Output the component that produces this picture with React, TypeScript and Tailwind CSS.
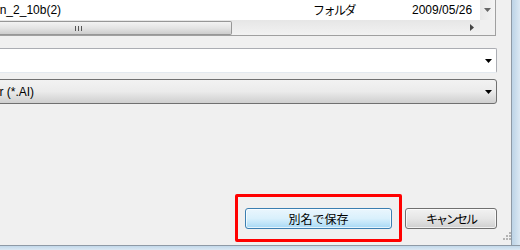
import React from "react";

const ui = { fontFamily: '"Liberation Sans", "Noto Sans CJK JP", sans-serif' };
const jp = { fontFamily: '"Noto Sans CJK JP", "Liberation Sans", sans-serif' };

function DownArrow() {
    return (
        <svg width="7" height="4" viewBox="0 0 7 4" className="shrink-0">
            <path d="M0 0h7L3.5 4z" fill="#000" />
        </svg>
    );
}

export default function App() {
    return (
        <div className="relative w-[520px] h-[250px] bg-[#f0f0f0] overflow-hidden flex flex-col text-[12px] text-black" style={ui}>
            <div className="flex h-[245px]">
                {/* dialog body */}
                <div className="w-[511px] flex flex-col">
                    {/* file list (cut off) */}
                    <div className="w-[496px] h-[36px] flex border-r border-b border-[#a0a0a0] bg-white">
                        <div className="w-[480px] flex flex-col">
                            <div className="h-[20px] flex items-center overflow-hidden whitespace-nowrap">
                                <span className="w-[313px] shrink-0 overflow-hidden">
                                    <span className="-ml-[29px] inline-block">design_2_10b(2)</span>
                                </span>
                                <span className="w-[99px] shrink-0 tracking-[-1.5px]" style={jp}>フォルダ</span>
                                <span className="shrink-0">2009/05/26</span>
                            </div>
                            <div className="h-[15px] flex items-center bg-gradient-to-b from-[#e6e6e6] to-[#f2f2f2]">
                                <div className="w-[232px] h-[14px] mt-[1px] rounded-r-[2px] border border-l-0 border-[#979797] bg-gradient-to-b from-[#f3f3f3] via-[#e4e4e4] to-[#cdcdcd] flex items-center justify-center">
                                    <div className="flex gap-[2px] -ml-[75px]">
                                        <div className="w-[1px] h-[5px] bg-[#555]" />
                                        <div className="w-[1px] h-[5px] bg-[#555]" />
                                        <div className="w-[1px] h-[5px] bg-[#555]" />
                                    </div>
                                </div>
                                <div className="flex-1" />
                                <svg width="4" height="7" viewBox="0 0 4 7" className="mr-[6px]">
                                    <path d="M0 0l4 3.5L0 7z" fill="#444" />
                                </svg>
                            </div>
                        </div>
                        <div className="w-[15px] flex flex-col">
                            <div className="h-[20px] bg-gradient-to-r from-[#e8e8e8] to-[#f4f4f4] flex items-center justify-center pb-[1px]">
                                <svg width="7" height="4" viewBox="0 0 7 4">
                                    <path d="M0 0h7L3.5 4z" fill="#666" />
                                </svg>
                            </div>
                            <div className="h-[15px] bg-[#f0f0f0]" />
                        </div>
                    </div>

                    {/* file name field */}
                    <div className="mt-[12px] w-[497px] h-[25px] flex items-center justify-end bg-white border border-[#abadb3] border-l-0 border-b-[#e3e9ef] rounded-r-[2px] pr-[4px]">
                        <DownArrow />
                    </div>

                    {/* file type combo */}
                    <div className="mt-[6px] -ml-[90px] w-[587px] h-[25px] flex items-center rounded-[3px] border border-[#707070] bg-gradient-to-b from-[#f2f2f2] via-[#ebebeb] to-[#cfcfcf] pl-[5px] pr-[4px] whitespace-nowrap">
                        <span>Adobe Illustrator (*.AI)</span>
                        <div className="flex-1" />
                        <DownArrow />
                    </div>

                    <div className="flex-1" />

                    {/* buttons */}
                    <div className="flex justify-end gap-[13px] pr-[14px] mb-[16px]" style={jp}>
                        <button className="w-[147px] h-[21px] rounded-[3px] border border-[#3c7fb1] bg-gradient-to-b from-[#eaf6fd] via-[#d9f0fc] to-[#a7d9f5] shadow-[inset_0_0_0_1px_rgba(255,255,255,0.7)] flex items-center justify-center leading-none text-[12px]">
                            別名で保存
                        </button>
                        <button className="w-[92px] h-[21px] rounded-[3px] border border-[#707070] bg-gradient-to-b from-[#f2f2f2] via-[#e6e6e6] to-[#cfcfcf] shadow-[inset_0_0_0_1px_rgba(255,255,255,0.7)] flex items-center justify-center leading-none text-[12px] tracking-[-2px]">
                            キャンセル
                        </button>
                    </div>
                </div>

                {/* window frame right */}
                <div className="relative w-[9px] border-l border-[#8e9aa6] bg-gradient-to-r from-[#bcd3e6] to-[#dbe8f3]" />
            </div>
            {/* window frame bottom */}
            <div className="h-[5px] border-t border-[#8e9aa6] bg-gradient-to-b from-[#c2d8ea] to-[#dbe8f3]" />

            {/* resize grip */}
            <div className="absolute left-[503px] top-[232px] grid grid-cols-3 gap-[1px]">
                {[0, 0, 1, 0, 1, 1, 1, 1, 1].map((v, i) => (
                    <div key={i} className={v ? "w-[2px] h-[2px] bg-[#b4b4b4]" : "w-[2px] h-[2px]"} />
                ))}
            </div>

            {/* red highlight */}
            <div className="absolute left-[235px] top-[194px] w-[167px] h-[48px] border-[3px] border-[#ff0000] rounded-[2px]" />
        </div>
    );
}
